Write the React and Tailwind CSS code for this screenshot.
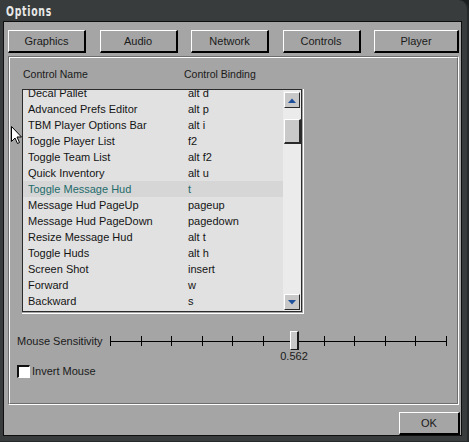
import React from "react";

const rows = [
  ["Decal Pallet", "alt d"],
  ["Advanced Prefs Editor", "alt p"],
  ["TBM Player Options Bar", "alt i"],
  ["Toggle Player List", "f2"],
  ["Toggle Team List", "alt f2"],
  ["Quick Inventory", "alt u"],
  ["Toggle Message Hud", "t"],
  ["Message Hud PageUp", "pageup"],
  ["Message Hud PageDown", "pagedown"],
  ["Resize Message Hud", "alt t"],
  ["Toggle Huds", "alt h"],
  ["Screen Shot", "insert"],
  ["Forward", "w"],
  ["Backward", "s"],
];

const tabs = [
  ["Graphics", "w-[78px]"],
  ["Audio", "w-[78px]"],
  ["Network", "w-[78px]"],
  ["Controls", "w-[78px]"],
  ["Player", "w-[85px]"],
];

const ticks = Array.from({ length: 12 });

function Btn({ children, className }) {
  return (
    <div
      className={
        "h-[23px] flex items-center justify-center border-t border-l border-white border-r-2 border-b-2 border-r-black border-b-black bg-[#a5a5a5] text-[11px] text-[#1a1a1a] " +
        className
      }
    >
      {children}
    </div>
  );
}

function Arrow({ down }) {
  return (
    <svg width="8" height="5" viewBox="0 0 8 5">
      {down ? (
        <polygon points="0,0 8,0 4,4.5" fill="#1d4f9c" />
      ) : (
        <polygon points="0,5 8,5 4,0.5" fill="#1d4f9c" />
      )}
    </svg>
  );
}

export default function App() {
  return (
    <div className="relative w-[469px] h-[442px] bg-[#1c1f1f] overflow-hidden font-['Liberation_Sans',Arial,sans-serif]">
      <div className="w-[469px] h-[442px] bg-[#383c3c] rounded-tr-[10px] border-r-2 border-b border-[#272a2a] flex flex-col">
        <div className="h-[21px] pl-[6px] flex items-center">
          <span className="inline-block origin-left scale-x-[0.74] font-['DejaVu_Sans_Condensed',sans-serif] font-bold text-[14px] tracking-[1px] text-[#e8e8e8] leading-none">
            Options
          </span>
        </div>
        <div className="ml-[3px] w-[459px] h-[415px] border border-[#0e0e0e] bg-[#a5a5a5] flex flex-col">
          {/* tabs */}
          <div className="mt-[8px] ml-[4px] w-[451px] flex justify-between">
            {tabs.map(([t, w]) => (
              <Btn key={t} className={w}>
                {t}
              </Btn>
            ))}
          </div>

          {/* panel */}
          <div className="mt-[3px] ml-[4px] w-[451px] h-[349px] border-t border-l border-[#6e6e6e] border-r border-b border-r-white border-b-white">
            <div className="w-full h-full border-t border-l border-white border-r border-b border-r-[#6e6e6e] border-b-[#6e6e6e] flex flex-col">
              {/* header */}
              <div className="mt-[10px] h-[13px] pl-[13px] flex text-[10.5px] leading-[13px] text-[#1a1a1a]">
                <div className="w-[161px]">Control Name</div>
                <div>Control Binding</div>
              </div>

              {/* list */}
              <div className="mt-[8px] ml-[12px] w-[282px] h-[225px] pr-px pb-px border-r border-b border-white">
                <div className="w-full h-full border border-[#2b2b2b] flex">
                  <div className="w-[260px] h-full overflow-hidden bg-[#e1e1e1]">
                    <div className="-mt-[5px]">
                      {rows.map(([n, b], i) => {
                        const hl = i === 6;
                        return (
                          <div
                            key={n}
                            className={
                              "h-[16px] pl-[5px] flex items-center text-[11px] leading-[16px] " +
                              (hl ? "bg-[#d6d6d6] text-[#236b6b]" : "text-[#141414]")
                            }
                          >
                            <div className="w-[160px] whitespace-nowrap">{n}</div>
                            <div className="whitespace-nowrap">{b}</div>
                          </div>
                        );
                      })}
                    </div>
                  </div>
                  <div className="w-[18px] h-full bg-[#ebebeb] flex flex-col items-start">
                    <div className="mt-[2px] ml-px w-[16px] h-[16px] bg-[#c8c8c8] border-t border-l border-white border-r border-b border-r-[#2a2a2a] border-b-[#2a2a2a] flex items-center justify-center">
                      <Arrow />
                    </div>
                    <div className="mt-[11px] ml-px w-[17px] h-[25px] bg-[#c9c9c9] border-t border-l border-white border-r-2 border-b-2 border-r-[#2a2a2a] border-b-[#2a2a2a]" />
                    <div className="mt-auto mb-px ml-px w-[16px] h-[16px] bg-[#c8c8c8] border-t border-l border-white border-r border-b border-r-[#2a2a2a] border-b-[#2a2a2a] flex items-center justify-center">
                      <Arrow down />
                    </div>
                  </div>
                </div>
              </div>

              {/* slider */}
              <div className="mt-[17px] h-[20px] flex items-center">
                <div className="ml-[7px] w-[93px] text-[11px] leading-[13px] text-[#1a1a1a] whitespace-nowrap">
                  Mouse Sensitivity
                </div>
                <div className="relative w-[337px] h-[20px] flex items-center justify-between">
                  <div className="absolute left-0 right-0 top-[10px] h-px bg-black" />
                  {ticks.map((_, i) => (
                    <div key={i} className="w-px h-[10px] bg-black" />
                  ))}
                  <div className="absolute left-[180px] top-0 w-[9px] h-[19px] bg-[#c8c8c8] border-t border-l border-white border-r-2 border-b border-r-[#1a1a1a] border-b-[#1a1a1a]" />
                  <div className="absolute left-[184px] top-[19px] -translate-x-1/2 text-[11px] leading-[13px] text-[#1a1a1a]">
                    0.562
                  </div>
                </div>
              </div>

              {/* checkbox */}
              <div className="mt-[14px] h-[13px] flex items-center">
                <div className="ml-[7px] w-[13px] h-[13px] bg-white border-t-2 border-l-2 border-[#111] border-r border-b border-r-white border-b-white" />
                <div className="ml-[2px] text-[11px] leading-[13px] text-[#1a1a1a]">Invert Mouse</div>
              </div>
            </div>
          </div>

          {/* OK */}
          <div className="mt-[7px] flex justify-end pr-px">
            <Btn className="w-[61px]">OK</Btn>
          </div>
        </div>
      </div>

      {/* mouse cursor */}
      <svg className="absolute left-[11px] top-[126px]" width="12" height="19" viewBox="0 0 12 19">
        <path
          d="M0.5 0.5 L0.5 15.5 L4 12 L6.5 17.5 L8.5 16.5 L6 11 L10.5 11 Z"
          fill="white"
          stroke="black"
          strokeWidth="1"
          strokeLinejoin="miter"
        />
      </svg>
    </div>
  );
}
